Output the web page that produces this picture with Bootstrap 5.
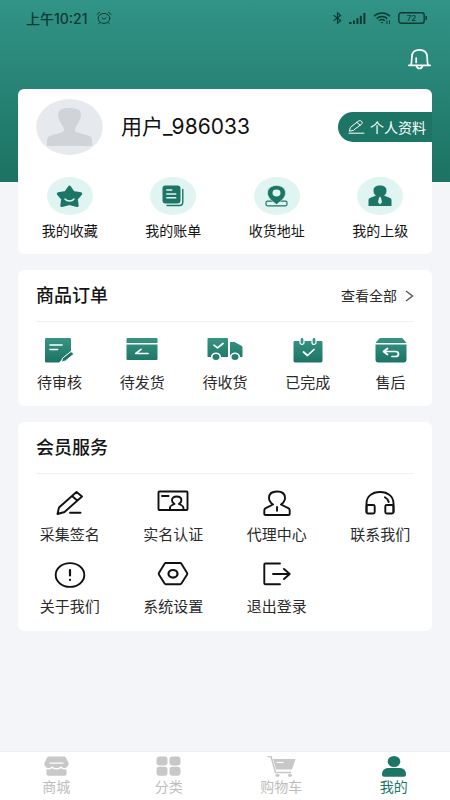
<!DOCTYPE html>
<html lang="zh-CN">
<head>
<meta charset="utf-8">
<meta name="viewport" content="width=device-width, initial-scale=1">
<title>我的</title>
<link href="https://cdn.jsdelivr.net/npm/bootstrap@5.3.0/dist/css/bootstrap.min.css" rel="stylesheet">
<style>
  :root { --brand: #1d7566; --tint: #e0f4f2; --ink: #141414; }
  body { font-family: Inter, "Noto Sans CJK SC", sans-serif; color: var(--ink); background: #f4f5f8; }
  svg { display: block; flex: none; }
  .screen { background: linear-gradient(#319486, #1c7263) no-repeat top / 100% 182px; }
  .status { height: 36px; padding: 0 22px 0 26px; font-size: 14px; font-weight: 500; color: #0c3a33; }
  .signals { gap: 7px; }
  .tools { height: 53px; padding: 12px 18px 0; }
  .stack { padding: 0 18px 18px; gap: 16px; }
  .panel { background: #fff; border-radius: 6px; }
  .profile { padding: 10px 0 0 18px; }
  .username { font-size: 21px; line-height: 28px; margin-left: 18px; font-weight: 400; color: #111; }
  .pill { background: var(--brand); color: #fff; height: 30px; border-radius: 15px 0 0 15px; padding: 0 6px 0 10px; font-size: 14px; gap: 5px; }
  .bubble { width: 46px; height: 38px; border-radius: 50%; background: var(--tint); color: var(--brand); }
  .quick { padding: 22px 0 13px; }
  .tile { color: var(--ink); line-height: 20px; }
  .quick .tile { font-size: 14px; gap: 6px; }
  .panel-head { margin: 0 18px; padding: 14px 0 13px; border-bottom: 1px solid #f1f1f1; line-height: 24px; }
  .panel-head h2 { font-size: 18px; line-height: 24px; font-weight: 500; }
  .more { font-size: 14px; gap: 8px; color: #2a2a2a; }
  .orders { padding: 16px 0 13px; }
  .orders .tile { font-size: 15px; gap: 10px; color: #2a2a2a; }
  .services { padding: 16px 0 14px; row-gap: 17px; }
  .services .tile { font-size: 15px; gap: 9px; color: #2a2a2a; }
  .tabs { background: #fff; border-top: 1px solid #eceef0; padding: 4px 0; font-size: 14px; line-height: 18px; }
  .tabs a { color: #bdbdbd; gap: 1px; }
  .tabs a.active { color: var(--brand); }
</style>
</head>
<body>
<svg width="0" height="0" class="position-absolute" aria-hidden="true">
  <defs><linearGradient id="leaf" gradientUnits="userSpaceOnUse" x1="0" y1="0" x2="0" y2="24"><stop offset="0" stop-color="#379483"/><stop offset="1" stop-color="#1d7465"/></linearGradient></defs>
</svg>
<div class="screen d-flex flex-column min-vh-100">
  <header>
    <div class="status d-flex align-items-center justify-content-between">
      <div class="d-flex align-items-center gap-2">
        <span>上午10:21</span>
        <svg width="16" height="14" viewBox="0 0 16 14" fill="none" stroke="currentColor" stroke-linecap="round"><ellipse cx="8" cy="7.400" rx="5.800" ry="5"/><path d="M1 3.400 3.600 1.200M15 3.400l-2.600-2.200M3.800 11.600l-1.200 1.200M12.200 11.600l1.200 1.200M6 6.800l2 1.600 2-1.600"/></svg>
      </div>
      <div class="signals d-flex align-items-center">
        <svg width="9" height="12" viewBox="0 0 9 12" fill="none" stroke="currentColor" stroke-width="1.200"><path d="M.6 3.200 7.600 8.600 4.500 11.300V.8l3.100 2.600L.6 8.900"/></svg>
        <svg width="17" height="11" viewBox="0 0 17 11" fill="currentColor"><path d="M0 9h2.600v2H0zM4 7.500h2V11H4zM7.400 5.200h2V11h-2zM10.800 2.800h2V11h-2zM14.400 0h2v11h-2z"/></svg>
        <svg width="18" height="12" viewBox="0 0 18 12" fill="none" stroke="currentColor" stroke-width="1.500"><path d="M1 4.200c4.500-4.300 11.500-4.300 16 0M3.700 6.600c3-2.900 7.600-2.900 10.600 0M6.200 8.800c1.700-1.500 3.900-1.500 5.600 0"/><path d="M7.500 10 9 11.500l1.500-1.500z" fill="currentColor" stroke="none"/><path d="M14 8.500V12M16.500 8.500V12" stroke-width="1"/></svg>
        <svg width="30" height="12" viewBox="0 0 30 12"><rect x=".8" y=".8" width="25.400" height="10.400" rx="2.500" fill="none" stroke="currentColor" stroke-width="1.400"/><path d="M27.500 4h1.500v4h-1.500z" fill="currentColor"/><text x="13.500" y="9" font-size="8" text-anchor="middle" fill="currentColor">72</text></svg>
      </div>
    </div>
    <div class="tools d-flex justify-content-end align-items-start">
      <button type="button" class="btn p-0 border-0 text-white" aria-label="消息">
        <svg width="25" height="22" viewBox="0 0 25 22" fill="none" stroke="currentColor" stroke-width="1.700" stroke-linecap="round"><path d="M1.800 17.300h21.400M4 17c.8-3 .8-4.500.8-7.500C4.800 4.300 7.600 1.800 12.500 1.800s7.700 2.500 7.700 7.700c0 3 0 4.500.8 7.500M9.200 10v4.500M9.500 18c.8 3.300 5.200 3.300 6 0"/></svg>
      </button>
    </div>
  </header>

  <main class="stack d-flex flex-column">
    <section class="panel">
      <div class="profile d-flex align-items-center">
        <svg width="67" height="56" viewBox="0 0 67 56"><ellipse cx="33.500" cy="28" rx="33.300" ry="28" fill="#e6e9ee"/><path d="M11 47v-5c0-4 2-5 6-6.200 7-2 11-2 11-5.300 0-2.800-2-3.600-3.500-7C23.200 20.700 22 18 22 15.500 22 10.500 27 9 33.500 9S45 10.500 45 15.500c0 2.500-1.200 5.200-2.500 8-1.500 3.400-3.500 4.200-3.500 7 0 3.300 4 3.300 11 5.300 4 1.200 6 2.200 6 6.200v5z" fill="#d0d4d8"/></svg>
        <h1 class="username mb-0">用户_986033</h1>
        <button type="button" class="pill btn border-0 ms-auto d-flex align-items-center">
          <svg width="17" height="14" viewBox="0 0 17 14" fill="none" stroke="currentColor" stroke-linecap="round" stroke-linejoin="round"><path d="M1.500 10.800 2.400 7.400 10.300 1.200c1-.8 2.200-.7 3.200.1 1 .9 1 2 0 2.800L5.600 10.200zM8.800 2.400l3.400 2.800M1 13.200h15"/></svg>
          个人资料
        </button>
      </div>
      <nav class="quick row row-cols-4 g-0" aria-label="快捷入口">
        <a href="#" class="tile col d-flex flex-column align-items-center text-decoration-none">
          <span class="bubble d-flex align-items-center justify-content-center"><svg width="27" height="23" viewBox="0 0 27 23"><path d="M13.500 2.200 17.300 7.600 24.700 8.800 20.300 13.900 21.200 20.500 13.500 18.600 5.800 20.500 6.700 13.900 2.300 8.800 9.700 7.600z" fill="currentColor" stroke="currentColor" stroke-width="3" stroke-linejoin="round"/><path d="M9 14c2 2.800 7 2.800 9 0" fill="none" stroke="#e0f4f2" stroke-width="1.500" stroke-linecap="round"/></svg></span>
          我的收藏</a>
        <a href="#" class="tile col d-flex flex-column align-items-center text-decoration-none">
          <span class="bubble d-flex align-items-center justify-content-center"><svg width="22" height="22" viewBox="0 0 22 22"><rect x=".5" y=".5" width="18" height="18" rx="3" fill="currentColor"/><path d="M4.800 5h5M4.800 9h9M4.800 12.700h9" stroke="#e0f4f2" stroke-width="1.400" stroke-linecap="round"/><path d="M20.800 4.500V17c0 2.500-1 3.500-3.500 3.500H5" fill="none" stroke="currentColor" stroke-width="1.400" stroke-linecap="round"/></svg></span>
          我的账单</a>
        <a href="#" class="tile col d-flex flex-column align-items-center text-decoration-none">
          <span class="bubble d-flex align-items-center justify-content-center"><svg width="23" height="22" viewBox="0 0 23 22"><rect x="1" y="16.200" width="21" height="4.600" rx="1.500" fill="none" stroke="currentColor" stroke-width="1.200"/><path d="M11.500 19.500C7 16 2.500 12.500 2.500 8c0-4.700 4-7.500 9-7.500s9 2.800 9 7.500c0 4.500-4.500 8-9 11.500z" fill="currentColor" stroke="#e0f4f2" stroke-width=".6"/><ellipse cx="11.500" cy="8" rx="4" ry="3.400" fill="#e0f4f2"/></svg></span>
          收货地址</a>
        <a href="#" class="tile col d-flex flex-column align-items-center text-decoration-none">
          <span class="bubble d-flex align-items-center justify-content-center"><svg width="24" height="22" viewBox="0 0 24 22"><path d="M.5 21v-5.500c0-1.500.5-2 2-2.700L8 10.500C6.500 9.500 5.500 8.500 5.500 5.500 5.500 2 8 .5 12 .5s6.500 1.500 6.500 5c0 3-1 4-2.500 5l5.500 2.300c1.500.7 2 1.200 2 2.700V21z" fill="currentColor"/><path d="m12 11.500 1 1.200 1 4.500-2 2.300-2-2.300 1-4.500z" fill="#e0f4f2"/></svg></span>
          我的上级</a>
      </nav>
    </section>

    <section class="panel">
      <div class="panel-head d-flex justify-content-between align-items-center">
        <h2 class="mb-0">商品订单</h2>
        <a href="#" class="more d-flex align-items-center text-decoration-none">查看全部
          <svg width="9" height="12" viewBox="0 0 9 12" fill="none" stroke="#555" stroke-width="1.400"><path d="M1 1l6.500 5L1 11"/></svg></a>
      </div>
      <nav class="orders row row-cols-5 g-0" aria-label="商品订单">
        <a href="#" class="tile col d-flex flex-column align-items-center text-decoration-none">
          <svg width="30" height="25" viewBox="0 0 30 25"><path d="M2.500 0h23c1 0 1.500.4 1.500 1.200V13L15 24.500H2.500c-1 0-1.500-.4-1.500-1.200V1.200C1 .4 1.500 0 2.500 0z" fill="url(#leaf)"/><path d="M6 7h12M6 11.500h7.500" stroke="#fff" stroke-width="1.600" stroke-linecap="round"/><path d="m17.500 24.200 1-4 8.500-6.700 3 2.400-8.500 7z" fill="#1d7465" stroke="#fff" stroke-width="1"/></svg>
          待审核</a>
        <a href="#" class="tile col d-flex flex-column align-items-center text-decoration-none">
          <svg width="32" height="25" viewBox="0 0 32 25"><path d="M2 0h28c1 0 1.500.5 1.500 1.400V5H.5V1.400C.5.500 1 0 2 0zM.5 6.500h31v14c0 1-.5 1.500-1.500 1.500H2c-1 0-1.500-.5-1.500-1.500z" fill="url(#leaf)"/><path d="M15 11.300 9.800 15.500H22" fill="none" stroke="#fff" stroke-width="1.700" stroke-linecap="round" stroke-linejoin="round"/></svg>
          待发货</a>
        <a href="#" class="tile col d-flex flex-column align-items-center text-decoration-none">
          <svg width="36" height="25" viewBox="0 0 36 25"><path d="M1.500 0H20c.7 0 1 .4 1 1v18H1.500C.8 19 .5 18.600.5 18V1c0-.6.300-1 1-1zM23 4h4.500l6.500 3.500c1 .6 1.500 1 1.500 2.500v8c0 .7-.3 1-1 1H23z" fill="url(#leaf)"/><path d="m7 7.200 3.500 2.700L16 5.500" fill="none" stroke="#fff" stroke-width="1.700" stroke-linecap="round" stroke-linejoin="round"/><g fill="#237f70" stroke="#fff" stroke-width="1.600"><ellipse cx="9" cy="19" rx="4.300" ry="3.800"/><ellipse cx="28" cy="19" rx="4.300" ry="3.800"/></g></svg>
          待收货</a>
        <a href="#" class="tile col d-flex flex-column align-items-center text-decoration-none">
          <svg width="30" height="25" viewBox="0 0 30 25"><rect x=".5" y="3" width="29" height="21.500" rx="1.400" fill="url(#leaf)"/><g fill="#379483" stroke="#fff" stroke-width="1.200"><rect x="7" y="-.5" width="4" height="7" rx="2"/><rect x="19" y="-.5" width="4" height="7" rx="2"/></g><path d="m10.500 14 4 3.500 6.500-6" fill="none" stroke="#fff" stroke-width="1.700" stroke-linecap="round" stroke-linejoin="round"/></svg>
          已完成</a>
        <a href="#" class="tile col d-flex flex-column align-items-center text-decoration-none">
          <svg width="32" height="25" viewBox="0 0 32 25"><path d="M6 0h20c1 0 1.500.2 2.200.9L31.500 5H.5L3.800.9C4.500.200 5 0 6 0zM.5 6.500h31v15c0 2-.8 3-3 3h-25c-2.200 0-3-1-3-3z" fill="url(#leaf)"/><path d="m12.500 10.500-4 3 4 3M9 13.500h11.500c4 0 4 5 0 5H17" fill="none" stroke="#fff" stroke-width="1.700" stroke-linecap="round" stroke-linejoin="round"/></svg>
          售后</a>
      </nav>
    </section>

    <section class="panel">
      <div class="panel-head"><h2 class="mb-0">会员服务</h2></div>
      <nav class="services row row-cols-4 g-0" aria-label="会员服务">
        <a href="#" class="tile col d-flex flex-column align-items-center text-decoration-none">
          <svg width="28" height="26" viewBox="0 0 28 26" fill="none" stroke="#111" stroke-width="1.900" stroke-linecap="round" stroke-linejoin="round"><path d="M1.500 24 3 17.500 20.500 2l5.500 4.500L8.500 22zM16 6l5.300 4.500M14 22.700h10.500"/></svg>
          采集签名</a>
        <a href="#" class="tile col d-flex flex-column align-items-center text-decoration-none">
          <svg width="32" height="26" viewBox="0 0 32 26" fill="none" stroke="#111" stroke-width="1.900" stroke-linecap="round" stroke-linejoin="round"><rect x="1.500" y="1.500" width="29" height="18.500" rx="1"/><path d="M5 6h6.500M13 19.500v-2c0-1.500 1-2 4.500-3.500-1.700-1.200-2.500-2-2.500-3.800 0-2.400 1.800-3.700 4.700-3.700s4.700 1.300 4.700 3.700c0 1.800-.8 2.600-2.500 3.800 3.500 1.500 4.500 2 4.500 3.500v2"/></svg>
          实名认证</a>
        <a href="#" class="tile col d-flex flex-column align-items-center text-decoration-none">
          <svg width="28" height="26" viewBox="0 0 28 26" fill="none" stroke="#111" stroke-width="1.900" stroke-linecap="round" stroke-linejoin="round"><path d="M2.500 25c-.8 0-1.200-.3-1.200-1v-3.500c0-1.200.3-1.700 1.500-2.300L10 14.500c-2.500-1.800-4-3.500-4-6.500 0-4 3-6.500 8-6.500s8 2.500 8 6.500c0 3-1.500 4.700-4 6.500l7.200 3.700c1.200.6 1.500 1.100 1.500 2.300V24c0 .7-.4 1-1.200 1zM14 17v3.800"/></svg>
          代理中心</a>
        <a href="#" class="tile col d-flex flex-column align-items-center text-decoration-none">
          <svg width="30" height="26" viewBox="0 0 30 26" fill="none" stroke="#111" stroke-width="1.900" stroke-linecap="round" stroke-linejoin="round"><path d="M1.500 22V13.500C1.500 6.500 7 2 15 2s13.500 4.500 13.500 11.500V22M20 7.300c2 1.200 3.200 2.700 3.700 4.700"/><rect x="1.500" y="15" width="8.200" height="8.500" rx="1.500"/><rect x="20.300" y="15" width="8.200" height="8.500" rx="1.500"/></svg>
          联系我们</a>
        <a href="#" class="tile col d-flex flex-column align-items-center text-decoration-none">
          <svg width="32" height="26" viewBox="0 0 32 26" fill="none" stroke="#111" stroke-width="1.900" stroke-linecap="round"><ellipse cx="16" cy="13" rx="14.300" ry="11.900"/><path d="M16 8v5.500M16 17.800v.2" stroke-width="2.200"/></svg>
          关于我们</a>
        <a href="#" class="tile col d-flex flex-column align-items-center text-decoration-none">
          <svg width="32" height="26" viewBox="0 0 32 26" fill="none" stroke="#111" stroke-width="1.900" stroke-linejoin="round"><path d="M8.800 1h14.400c.6 0 .9.200 1.200.7l5.700 9.300c.3.500.3.900 0 1.400l-5.700 9.200c-.3.500-.6.700-1.200.7H8.800c-.6 0-.9-.2-1.200-.7L1.900 12.400c-.3-.5-.3-.9 0-1.400l5.700-9.300c.3-.5.600-.7 1.200-.7z"/><ellipse cx="16" cy="11.800" rx="4.500" ry="3.800" stroke-width="2.200"/></svg>
          系统设置</a>
        <a href="#" class="tile col d-flex flex-column align-items-center text-decoration-none">
          <svg width="28" height="26" viewBox="0 0 28 26" fill="none" stroke="#111" stroke-width="1.900" stroke-linecap="round" stroke-linejoin="round"><path d="M17 1.500H2.500c-.8 0-1.200.4-1.200 1v18.800c0 .7.400 1 1.200 1H17M10 12h16.500M21 7l5.700 5-5.700 5"/></svg>
          退出登录</a>
      </nav>
    </section>
  </main>

  <nav class="tabs row row-cols-4 g-0 mt-auto" aria-label="主导航">
    <a href="#" class="col d-flex flex-column align-items-center text-decoration-none">
      <svg width="25" height="21" viewBox="0 0 25 21" fill="#c8c8c8"><path d="M5 .5h15c1 0 1.500.3 2 1.200L24.500 7c.7 3-1.500 5-4 5-1.500 0-2.500-.8-3.500-1.800-1 1.200-2.500 1.800-4.500 1.800s-3.500-.6-4.500-1.800C7 11.200 6 12 4.500 12 2 12-.2 10 .5 7L3 1.700C3.500.8 4 .5 5 .5zM2.500 13.200c2 .6 4 .2 5.500-1 2.600 1.600 6.400 1.600 9 0 1.500 1.200 3.500 1.600 5.500 1V18c0 1.200-.6 1.700-2 1.700h-16c-1.400 0-2-.5-2-1.700z"/><path d="M6 7.200h13" stroke="#fff" stroke-width="1.300" stroke-linecap="round"/></svg>
      商城</a>
    <a href="#" class="col d-flex flex-column align-items-center text-decoration-none">
      <svg width="25" height="21" viewBox="0 0 25 21" fill="#c8c8c8"><rect x=".5" y=".5" width="11" height="9" rx="3"/><rect x="13.500" y=".5" width="11" height="9" rx="3"/><rect x=".5" y="10.800" width="11" height="9" rx="3"/><rect x="13.500" y="10.800" width="11" height="9" rx="3"/></svg>
      分类</a>
    <a href="#" class="col d-flex flex-column align-items-center text-decoration-none">
      <svg width="29" height="21" viewBox="0 0 29 21" fill="#c8c8c8"><path d="M.5.500H4L8.500 16.500H24" fill="none" stroke="#c8c8c8" stroke-width="1.500"/><path d="M6 3h22.500L25 13.500H9z"/><ellipse cx="10.500" cy="19.300" rx="2" ry="1.600"/><ellipse cx="23" cy="19.300" rx="2" ry="1.600"/><path d="M9.500 6.500h7" stroke="#fff" stroke-width="1.200"/></svg>
      购物车</a>
    <a href="#" class="active col d-flex flex-column align-items-center text-decoration-none" aria-current="page">
      <svg width="26" height="21" viewBox="0 0 26 21" fill="currentColor"><ellipse cx="13" cy="5.500" rx="6.300" ry="5.500"/><path d="M1 18.500c0-5 3-6.500 7.500-6.500h9c4.500 0 7.500 1.500 7.500 6.500 0 1.500-.7 2.200-2.200 2.200H3.200C1.700 20.700 1 20 1 18.500z"/></svg>
      我的</a>
  </nav>
</div>
<script src="https://cdn.jsdelivr.net/npm/bootstrap@5.3.0/dist/js/bootstrap.bundle.min.js"></script>
</body>
</html>
